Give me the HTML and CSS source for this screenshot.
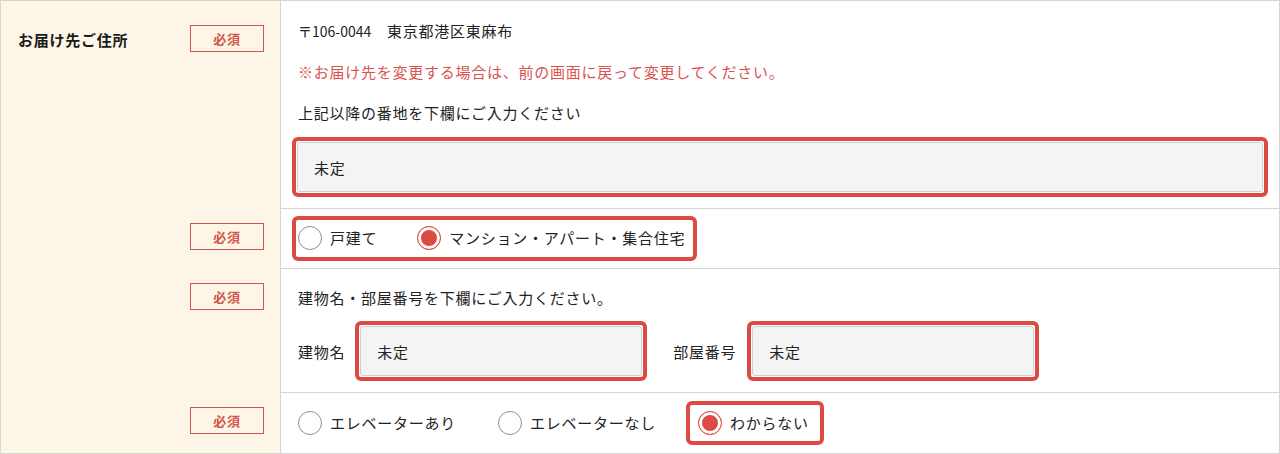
FILE: index.html
```html
<!DOCTYPE html>
<html lang="ja">
<head>
<meta charset="utf-8">
<title>お届け先ご住所</title>
<link rel="stylesheet" href="styles.css">
</head>
<body>
<div class="form">
  <div class="row">
    <div class="head head-first">
      <span class="head-label">お届け先ご住所</span>
      <span class="badge">必須</span>
    </div>
    <div class="body body-first">
      <p class="line"><span class="zip">〒106-0044</span>　東京都港区東麻布</p>
      <p class="line note">※お届け先を変更する場合は、前の画面に戻って変更してください。</p>
      <p class="line">上記以降の番地を下欄にご入力ください</p>
      <div class="field field-wide"><input class="input" type="text" value="未定" readonly></div>
    </div>
  </div>

  <div class="row">
    <div class="head">
      <span class="badge">必須</span>
    </div>
    <div class="body body-type">
      <div class="group">
        <label class="opt"><span class="radio"></span><span class="opt-text">戸建て</span></label>
        <label class="opt opt-last"><span class="radio checked"></span><span class="opt-text">マンション・アパート・集合住宅</span></label>
      </div>
    </div>
  </div>

  <div class="row">
    <div class="head">
      <span class="badge">必須</span>
    </div>
    <div class="body body-building">
      <p class="line">建物名・部屋番号を下欄にご入力ください。</p>
      <div class="pair">
        <span class="pair-label">建物名</span>
        <div class="field field-half"><input class="input" type="text" value="未定" readonly></div>
        <span class="pair-label pair-label-second">部屋番号</span>
        <div class="field field-half"><input class="input" type="text" value="未定" readonly></div>
      </div>
    </div>
  </div>

  <div class="row">
    <div class="head">
      <span class="badge">必須</span>
    </div>
    <div class="body body-elevator">
      <label class="opt opt-spaced"><span class="radio"></span><span class="opt-text">エレベーターあり</span></label>
      <label class="opt opt-spaced-2"><span class="radio"></span><span class="opt-text">エレベーターなし</span></label>
      <label class="opt opt-boxed"><span class="radio checked"></span><span class="opt-text">わからない</span></label>
    </div>
  </div>
</div>
</body>
</html>
```

FILE: styles.css
```css
* {
  box-sizing: border-box;
}

html, body {
  margin: 0;
  padding: 0;
  background: #ffffff;
}

body {
  font-family: "Noto Sans CJK JP", "Noto Sans", sans-serif;
  font-size: 15px;
  letter-spacing: 0.05em;
  color: #222222;
  width: 1280px;
  height: 454px;
  overflow: hidden;
}

.form {
  width: 1280px;
  border: 1px solid #d5d5d5;
}

.row {
  display: grid;
  grid-template-columns: 280px 1fr;
}

.head {
  background: #fdf5e5;
  border-right: 1px solid #d5d5d5;
  display: flex;
  justify-content: space-between;
  align-items: flex-start;
  padding: 15px 16px 0 17px;
}

.head-first {
  padding-top: 24px;
}

.head-label {
  font-weight: bold;
  line-height: 27px;
  color: #1a1a1a;
  margin-top: 1px;
}

.badge {
  margin-left: auto;
  width: 74px;
  height: 27px;
  border: 1px solid #d2564b;
  color: #d2564b;
  font-size: 13px;
  font-weight: bold;
  line-height: 25px;
  text-align: center;
  letter-spacing: 0.05em;
  background: transparent;
}

.body {
  border-top: 1px solid #d5d5d5;
  padding: 0 11px 0 17px;
}

.body-first {
  border-top: none;
  padding-top: 18px;
  padding-bottom: 11px;
}

.line {
  margin: 0 0 17px 0;
  line-height: 24px;
}

.zip {
  font-size: 14px;
  letter-spacing: 0;
}

.note {
  color: #d9534f;
}

.body-first .line:nth-of-type(3) {
  margin-bottom: 12px;
}

.field {
  border: 4px solid #dd4a42;
  border-radius: 6px;
  padding: 1px;
  background: #ffffff;
}

.field-wide {
  margin-left: -6px;
}

.field-half {
  width: 292px;
}

.input {
  display: block;
  width: 100%;
  height: 50px;
  border: 1px solid #cfcfcf;
  border-radius: 3px;
  background: #f4f4f4;
  padding: 0 16px;
  font: inherit;
  letter-spacing: 0.05em;
  color: #222222;
  outline: none;
  margin: 0;
}

.body-type {
  padding-top: 7px;
  padding-bottom: 7px;
}

.group {
  display: inline-flex;
  align-items: center;
  margin-left: -6px;
  border: 4px solid #dd4a42;
  border-radius: 6px;
  padding: 6px 8px 7px 2px;
}

.opt {
  display: inline-flex;
  align-items: center;
  gap: 8px;
  line-height: 24px;
}

.opt-last {
  margin-left: 40px;
}

.radio {
  width: 24px;
  height: 24px;
  border-radius: 50%;
  border: 1px solid #8e8e8e;
  background: #ffffff;
  flex: none;
}

.radio.checked {
  border-color: #dd4a42;
  background: #dd4a42;
  box-shadow: inset 0 0 0 3px #ffffff;
}

.body-building {
  padding-top: 17px;
  padding-bottom: 11px;
}

.body-building .line {
  margin-bottom: 11px;
}

.pair {
  display: flex;
  align-items: center;
}

.pair-label {
  margin-right: 10px;
}

.pair-label-second {
  margin-left: 26px;
  margin-right: 11px;
}

.body-elevator {
  display: flex;
  align-items: center;
  padding-top: 8px;
  padding-bottom: 8px;
}

.opt-spaced {
  margin-right: 42px;
}

.opt-spaced-2 {
  margin-right: 30px;
}

.opt-boxed {
  border: 4px solid #dd4a42;
  border-radius: 6px;
  padding: 6px 11px 6px 8px;
}
```
